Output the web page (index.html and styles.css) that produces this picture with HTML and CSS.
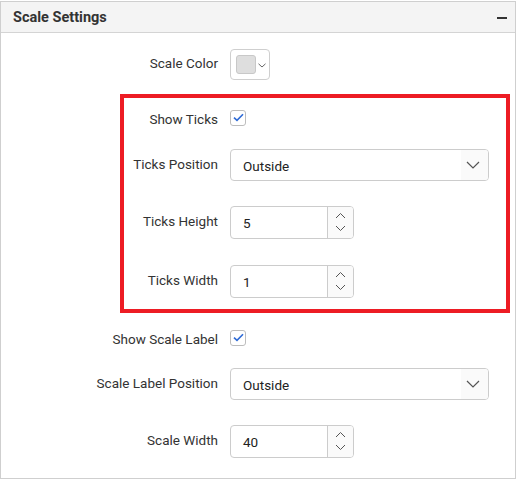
FILE: index.html
```html
<!DOCTYPE html>
<html>
<head>
<meta charset="utf-8">
<link rel="stylesheet" href="styles.css">
</head>
<body>
<div class="panel">
  <div class="header">
    <span class="title">Scale Settings</span>
    <span class="minus"></span>
  </div>
  <div class="body">
    <div class="row r1">
      <div class="label">Scale Color</div>
      <div class="picker">
        <span class="swatch"></span>
        <svg class="pchev" width="8" height="5" viewBox="0 0 8 5"><path d="M0.5 0.8 L4 4 L7.5 0.8" fill="none" stroke="#666" stroke-width="1"/></svg>
      </div>
    </div>
    <div class="row r2 checkrow">
      <div class="label">Show Ticks</div>
      <div class="check"><svg width="11" height="9" viewBox="0 0 11 9"><path d="M1 4.6 L4 7.4 L10 1.2" fill="none" stroke="#2f6bd6" stroke-width="1.6"/></svg></div>
    </div>
    <div class="row r3">
      <div class="label">Ticks Position</div>
      <div class="dropdown">
        <span class="value">Outside</span>
        <span class="ddbtn"><svg width="14" height="8" viewBox="0 0 14 8"><path d="M1 1 L7 7 L13 1" fill="none" stroke="#555" stroke-width="1.2"/></svg></span>
      </div>
    </div>
    <div class="row r4">
      <div class="label">Ticks Height</div>
      <div class="numeric">
        <span class="value">5</span>
        <span class="spin">
          <svg width="11" height="7" viewBox="0 0 11 7"><path d="M1 6 L5.5 1.5 L10 6" fill="none" stroke="#555" stroke-width="1"/></svg>
          <svg width="11" height="7" viewBox="0 0 11 7"><path d="M1 1 L5.5 5.5 L10 1" fill="none" stroke="#555" stroke-width="1"/></svg>
        </span>
      </div>
    </div>
    <div class="row r5">
      <div class="label">Ticks Width</div>
      <div class="numeric">
        <span class="value">1</span>
        <span class="spin">
          <svg width="11" height="7" viewBox="0 0 11 7"><path d="M1 6 L5.5 1.5 L10 6" fill="none" stroke="#555" stroke-width="1"/></svg>
          <svg width="11" height="7" viewBox="0 0 11 7"><path d="M1 1 L5.5 5.5 L10 1" fill="none" stroke="#555" stroke-width="1"/></svg>
        </span>
      </div>
    </div>
    <div class="row r6 checkrow">
      <div class="label">Show Scale Label</div>
      <div class="check"><svg width="11" height="9" viewBox="0 0 11 9"><path d="M1 4.6 L4 7.4 L10 1.2" fill="none" stroke="#2f6bd6" stroke-width="1.6"/></svg></div>
    </div>
    <div class="row r7">
      <div class="label">Scale Label Position</div>
      <div class="dropdown">
        <span class="value">Outside</span>
        <span class="ddbtn"><svg width="14" height="8" viewBox="0 0 14 8"><path d="M1 1 L7 7 L13 1" fill="none" stroke="#555" stroke-width="1.2"/></svg></span>
      </div>
    </div>
    <div class="row r8">
      <div class="label">Scale Width</div>
      <div class="numeric">
        <span class="value">40</span>
        <span class="spin">
          <svg width="11" height="7" viewBox="0 0 11 7"><path d="M1 6 L5.5 1.5 L10 6" fill="none" stroke="#555" stroke-width="1"/></svg>
          <svg width="11" height="7" viewBox="0 0 11 7"><path d="M1 1 L5.5 5.5 L10 1" fill="none" stroke="#555" stroke-width="1"/></svg>
        </span>
      </div>
    </div>
    <div class="highlight"></div>
  </div>
</div>
</body>
</html>
```
FILE: styles.css
```css
* { box-sizing: border-box; }
html, body { margin: 0; padding: 0; background: #fff; }
body {
  font-family: Roboto, "Liberation Sans", sans-serif;
  font-size: 13.5px;
  color: #333;
}
.panel {
  margin-top: 1px;
  width: 516px;
  height: 478px;
  border: 1px solid #cfcfcf;
  position: relative;
}
.header {
  height: 31px;
  background: #f4f4f4;
  border-bottom: 1px solid #d4d4d4;
  display: flex;
  align-items: center;
  justify-content: space-between;
  padding: 0 8px 0 12px;
}
.title {
  font-weight: bold;
  font-size: 14.5px;
  color: #333;
  padding-top: 1px;
}
.minus {
  width: 10px;
  height: 2px;
  background: #333;
  margin-top: 2px;
}
.body {
  position: relative;
  padding-top: 15px;
}
.row {
  display: flex;
  align-items: center;
  height: 32px;
}
.label {
  width: 217px;
  text-align: right;
  margin-right: 12px;
  padding-bottom: 2px;
  color: #333;
  white-space: nowrap;
}
.checkrow .label {
  padding-bottom: 0;
  padding-top: 4px;
}
.r2 { margin-top: 21px; }
.r3 { margin-top: 16px; }
.r4 { margin-top: 25px; }
.r5 { margin-top: 27px; }
.r6 { margin-top: 24px; }
.r7 { margin-top: 15px; }
.r8 { margin-top: 25px; }

.picker {
  width: 40px;
  height: 31px;
  border: 1px solid #cfcfcf;
  border-radius: 4px;
  display: flex;
  align-items: center;
  padding-left: 5px;
}
.swatch {
  width: 20px;
  height: 19px;
  background: #dedede;
  border: 1px solid #c8c8c8;
  border-radius: 3px;
}
.pchev { margin-left: 2px; margin-top: 2px; }

.check {
  width: 16px;
  height: 16px;
  border: 1px solid #bdbdbd;
  border-radius: 3px;
  background: #fff;
  display: flex;
  align-items: center;
  justify-content: center;
  margin-top: 1px;
}

.dropdown {
  width: 259px;
  height: 32px;
  border: 1px solid #cccccc;
  border-radius: 4px;
  display: flex;
  align-items: center;
  justify-content: space-between;
  overflow: hidden;
}
.value {
  padding-left: 12px;
  color: #222;
  padding-top: 1px;
}
.ddbtn {
  width: 27px;
  height: 100%;
  background: #fafafa;
  display: flex;
  align-items: center;
  justify-content: center;
  padding-right: 4px;
}

.numeric {
  width: 124px;
  height: 33px;
  border: 1px solid #cccccc;
  border-radius: 4px;
  display: flex;
  align-items: center;
  justify-content: space-between;
  overflow: hidden;
}
.spin {
  width: 26px;
  height: 100%;
  border-left: 1px solid #cccccc;
  background: #fafafa;
  display: flex;
  flex-direction: column;
  align-items: center;
  justify-content: center;
  gap: 6px;
}
.highlight {
  position: absolute;
  left: 119px;
  top: 61px;
  width: 390px;
  height: 219px;
  border: 4px solid #ed1c24;
  pointer-events: none;
}
```
